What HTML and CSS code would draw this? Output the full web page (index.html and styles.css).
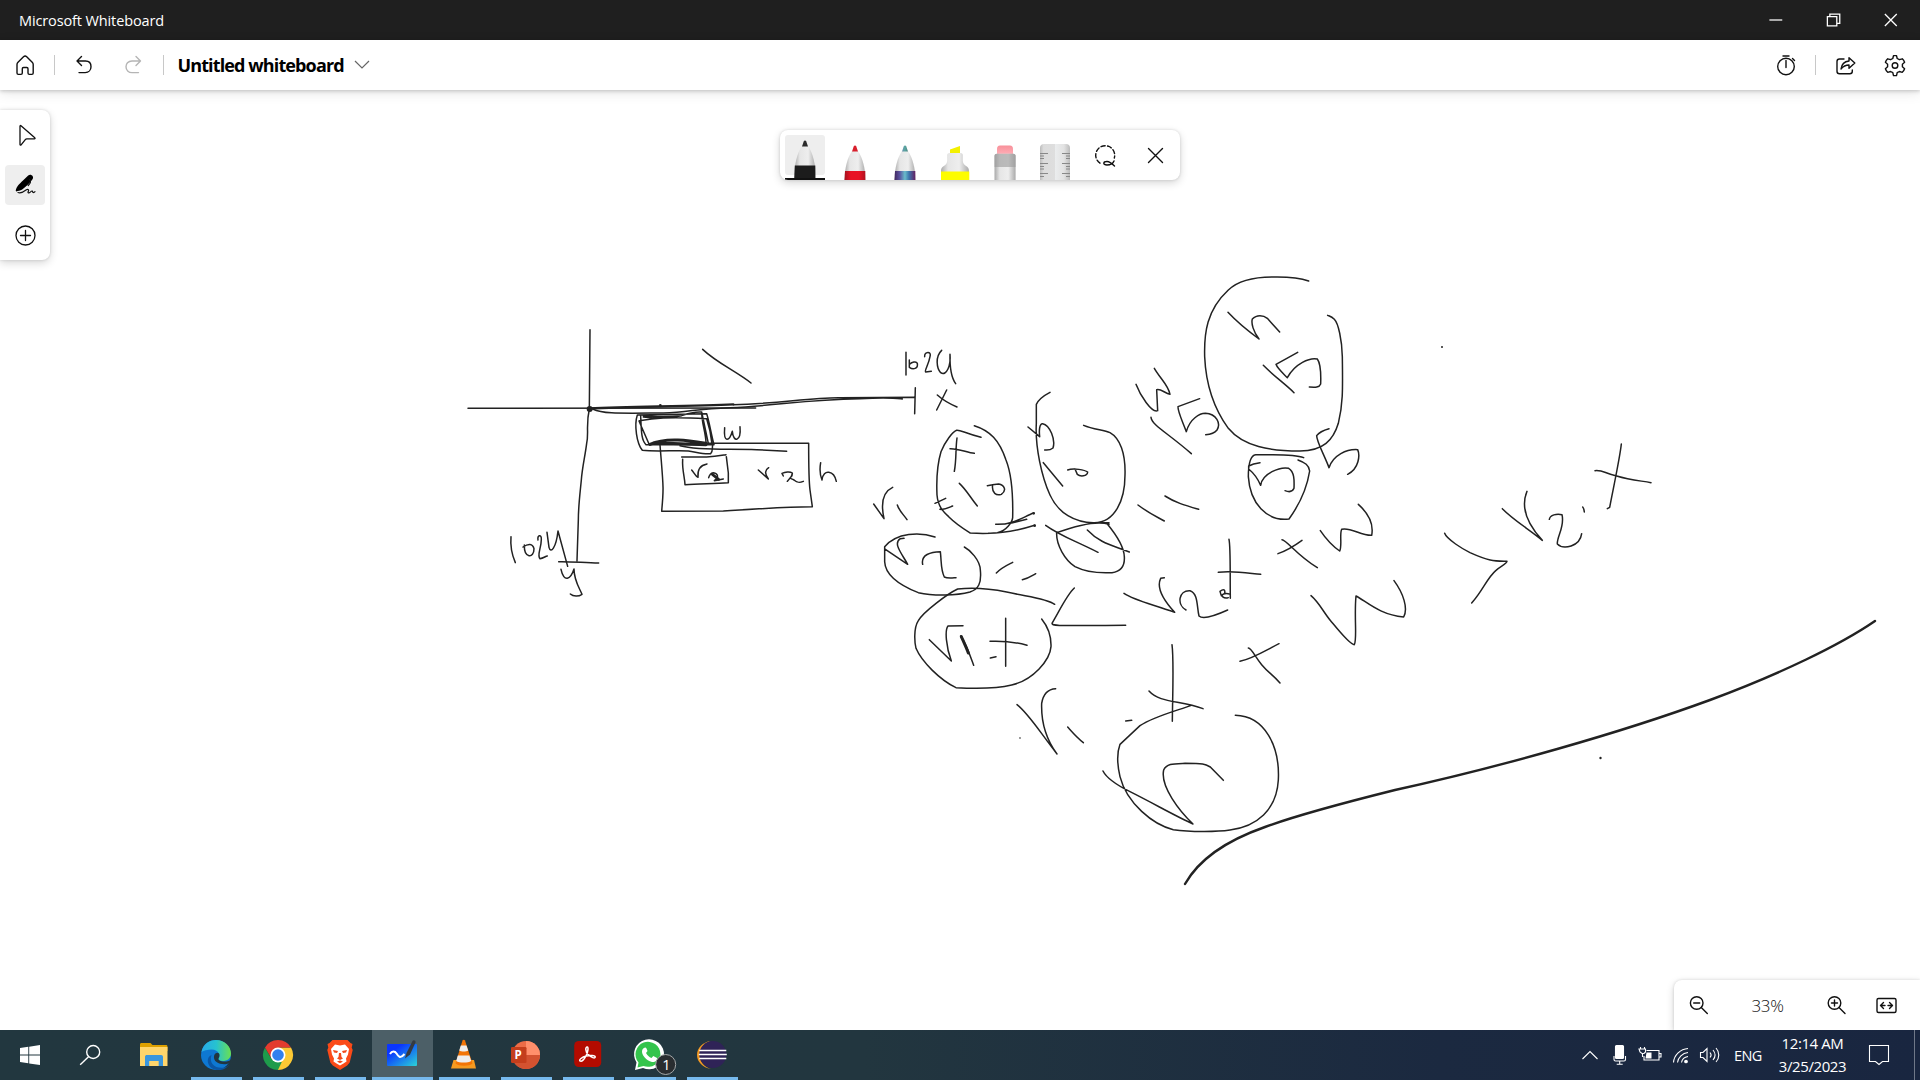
FILE: index.html
```html
<!DOCTYPE html>
<html lang="en">
<head>
<meta charset="utf-8">
<title>Microsoft Whiteboard</title>
<link rel="stylesheet" href="styles.css">
</head>
<body>
<header class="titlebar">
  <span class="app-name">Microsoft Whiteboard</span>
  <div class="window-controls">
    <svg viewBox="0 0 58 40"><path d="M14.500 20h13" stroke="#aaa" stroke-width="2"/></svg>
    <svg viewBox="0 0 58 40"><path d="M14.500 16.500h9.500v9.500H14.500zM17 16v-2h10v9.500h-2.500" stroke-width="1.300"/></svg>
    <svg viewBox="0 0 58 40"><path d="M15 14l12 12m0-12l-12 12" stroke-width="1.300"/></svg>
  </div>
</header>

<nav class="appbar">
  <div class="group">
    <svg class="tool home" viewBox="0 0 40 40"><path d="M12 19.500c0-1 .3-1.600 1-2.300l5.500-5.500c1-.9 2.200-.9 3.200 0l5.500 5.500c.7.700 1 1.300 1 2.300V28c0 .9-.4 1.400-1.300 1.400h-2.600c-.9 0-1.300-.5-1.300-1.400v-4.300c0-.8-.4-1.200-1.200-1.200h-3.300c-.8 0-1.200.4-1.200 1.200V28c0 .9-.4 1.400-1.300 1.400h-2.700c-.9 0-1.300-.5-1.300-1.400z"/></svg>
    <span class="divider"></span>
    <svg class="tool undo" viewBox="0 0 40 40"><path d="M18.500 11.500L14 16l4.500 4.500M14 16h8.500c4 0 5.500 3 5.500 5.700 0 3.300-2.300 5.900-5.800 5.900H16"/></svg>
    <svg class="tool redo" viewBox="0 0 40 40"><path d="M23 11.500l4.500 4.500-4.500 4.500M27.500 16H19c-4 0-6 3-6 5.700 0 3.300 2.500 5.900 6 5.900h6.500"/></svg>
    <span class="divider after-redo"></span>
    <h1 class="board-name">Untitled whiteboard</h1>
    <svg class="chevron" viewBox="0 0 16 10"><path d="M1 1l7 7 7-7"/></svg>
  </div>
  <div class="group">
    <svg class="tool" viewBox="0 0 40 40"><circle cx="20" cy="21.500" r="8.300"/><path d="M20 15.500v7M17 11h6M26.500 13.500l2 2"/></svg>
    <span class="divider before-share"></span>
    <svg class="tool share" viewBox="0 0 40 40"><path d="M19 14h-4.500c-1.700 0-2.500.9-2.500 2.500v9.800c0 1.600.9 2.500 2.500 2.500h10.300c1.600 0 2.500-.9 2.500-2.500V25M24 16v-3.300l5.800 5.300-5.800 5.300V20c-4 0-6 1.500-8 4 .6-4.500 3.500-7.600 8-8z"/></svg>
    <svg class="tool gear" viewBox="0 0 40 40"><circle cx="20" cy="20.500" r="2.800"/><path d="M17.800 13.500l.7-2.900h3l.7 2.900 2.200 1.200 2.900-.9c1 .9 1.900 2.300 2.300 3.500L27.400 19.200v2.600l2.200 2c-.4 1.200-1.300 2.700-2.300 3.500l-2.900-.8-2.200 1.200-.7 2.900h-3l-.7-2.900-2.200-1.200-2.900.8c-1-.8-1.900-2.300-2.300-3.500l2.200-2v-2.600l-2.200-1.900c.4-1.200 1.300-2.600 2.300-3.500l2.900.9z"/></svg>
  </div>
</nav>

<main class="board">
  <svg class="ink" viewBox="0 90 1920 940">
    <!-- coordinate axes with the two rectangles -->
    <g transform="translate(450 310) scale(.33333)">
      <path d="M420 59L418 297M54 295L917 294M418 297C407 345 417 370 410 400C405 440 397 470 394 510C389 560 385 590 385 630L381 752M326 755C360 754 400 758 446 759"/>
      <circle class="dot" cx="419" cy="297" r="9"/><circle class="dot" cx="631" cy="286" r="4"/>
      <path d="M418 295C560 290 740 288 850 283" stroke-width="7"/>
      <path d="M850 284C980 282 1080 262 1170 263L1393 262M428 297C460 312 500 310 640 309C720 307 740 295 840 293C980 288 1060 268 1230 266C1320 262 1330 264 1357 267M1396 233L1394 311M1462 255Q1484 275 1521 291M1490 240L1460 300M758 118C800 158 860 185 903 219"/>
      <path d="M1368 127V195M1378 150V172C1390 180 1405 176 1402 160C1398 152 1386 157 1378 163M1424 140C1422 124 1446 122 1440 140C1436 165 1422 182 1427 186L1444 184M1475 121C1455 140 1460 175 1472 188C1490 200 1503 165 1500 133C1499 180 1505 205 1517 221"/>
      <path d="M562 315C552 345 560 400 577 421C620 426 680 420 715 423C745 428 765 434 782 431C790 425 785 415 789 400M562 315L770 311C778 335 783 370 792 404M572 317C574 365 574 390 588 404L789 404M567 333L597 402M580 321C620 326 640 325 695 317C720 308 740 305 755 306L775 400M568 332C610 325 650 320 770 326C778 350 784 380 786 402M755 306C755 340 768 370 768 400M580 318C610 318 640 322 695 317"/>
      <path d="M600 403C650 380 720 392 768 400M612 398L768 404" stroke-width="9"/>
      <path d="M768 400H1076C1076 480 1076 510 1080 540L1087 590C1000 590 950 596 820 603L635 604C642 530 640 530 630 405M690 407C750 423 840 415 920 419L1010 424"/>
      <path d="M824 353C820 400 838 395 847 364C850 400 874 395 870 350M695 441H770C795 440 810 437 828 434M698 448C696 480 704 500 705 524C750 520 790 522 835 518L835 489L829 440M725 480C732 488 738 500 744 502C742 480 748 466 771 462"/>
      <path d="M776 503C778 495 784 489 790 488C804 490 808 502 793 512L820 507"/>
      <path d="M787 493L806 508" stroke-width="8"/>
      <path d="M925 480L955 507C943 490 945 480 956 473M1000 498L996 490C1005 486 1020 484 1027 489C1028 500 1015 508 1012 514M1026 497C1016 508 1022 504 1032 510C1042 520 1050 518 1060 514M1112 458C1108 480 1112 500 1116 510C1120 475 1152 482 1159 514"/>
      <path d="M183 680C180 715 186 735 196 758M223 705C222 745 252 747 252 716C248 700 235 700 219 711M264 690C261 674 275 672 274 688C274 715 260 735 270 746C280 745 286 739 292 738M291 667L297 712C302 732 318 715 324 663L353 769M333 778C342 820 362 808 372 777C372 810 386 830 396 853C386 860 370 860 361 852"/>
    </g>
    <!-- first columns of the comparison -->
    <g transform="translate(860 370) scale(.33333)">
      <path d="M363 202C310 188 303 180 290 181C278 185 255 215 243 245C231 285 229 330 231 375C234 410 250 425 266 440C290 464 320 482 331 489C360 491 395 490 412 488C440 483 457 455 458 443C460 350 450 300 438 270C418 210 390 182 343 167M291 204C286 240 290 265 283 304M270 236C295 235 320 247 343 250M298 340C320 360 330 382 352 408M382 347L398 344C394 370 410 378 424 373C442 360 432 345 416 342L397 344M225 400L257 385M240 418C255 420 268 412 278 408M407 463C460 465 490 440 521 429M385 490C440 490 480 480 524 466M455 459L500 448"/>
      <circle class="dot" cx="521" cy="430" r="4"/><circle class="dot" cx="524" cy="467" r="4"/>
      <path d="M570 67C545 80 535 90 529 103V160C525 230 545 320 570 375C595 430 645 458 700 458C765 460 795 390 795 315C797 250 780 205 750 188C730 180 700 178 671 166M504 171L539 200C537 182 538 160 548 161C570 165 587 210 579 234C572 240 563 241 554 240M550 278L608 348M623 300C640 293 675 300 683 306C682 320 660 320 652 313L645 297M557 466C600 497 640 510 714 547M682 480C720 520 755 525 808 546M747 463C710 450 640 470 590 488C588 525 615 570 645 590C690 613 740 608 756 608C780 605 795 590 793 560C792 530 765 490 742 462M700 458H747"/>
      <path d="M41 402L72 446C62 400 70 365 98 352M112 405C118 424 132 435 141 449M225 501C180 485 110 487 74 530V575C76 620 130 650 175 668C220 678 290 677 330 666C355 658 365 640 361 600C360 570 330 540 313 531M74 537L143 583C125 550 98 520 121 506L132 505M188 583C182 555 212 545 241 545C245 580 242 600 253 621C262 626 275 624 288 623M409 609C425 592 442 585 458 577M487 629C505 625 515 618 527 611"/>
      <path d="M584 703C560 685 500 680 440 666C400 658 340 652 293 657C265 670 190 725 175 752C160 775 164 820 168 835C185 875 240 930 288 953C340 956 410 956 455 945C520 930 570 870 573 830C574 800 562 768 545 747M208 809L274 873C258 830 254 780 264 768L309 767M437 745V889M390 814C440 812 480 820 501 826M391 864L408 860M302 798C320 825 328 850 341 886M643 654C620 675 600 720 576 760C576 768 585 767 797 766"/>
      <path d="M304 800C313 820 320 835 325 849" stroke-width="9"/>
      <path d="M834 405C870 432 890 440 913 453M915 378C945 397 970 405 1016 418M471 1004C505 1030 535 1080 591 1152C560 1110 543 1060 545 1000C550 970 565 957 587 956M623 1071C640 1090 650 1102 670 1118"/>
    </g>
    <!-- upper right: circled h 15 and the 5s -->
    <g transform="translate(1100 260) scale(.33333)">
      <path d="M626 63C590 50 550 51 525 51C450 50 410 66 385 90C320 150 312 220 314 290C318 380 345 450 385 505C430 560 510 573 600 573C670 573 700 540 715 490C730 430 728 380 727 290C726 240 715 190 703 178C695 170 690 169 683 166M384 157C410 185 440 210 477 237C460 215 453 190 457 177C470 163 490 165 502 175L539 216M490 316C520 347 560 375 582 398M593 277L528 313C532 325 547 338 562 353C585 310 630 292 652 297C663 312 663 345 662 372C658 383 645 382 628 381"/>
      <path d="M163 325C180 355 205 375 210 403C195 400 182 385 170 389L173 452C155 460 120 405 108 373M153 472C155 495 205 520 274 581M299 416L234 440C233 455 248 485 259 515C270 475 300 460 316 460C350 462 363 490 351 510C343 520 330 523 317 524"/>
      <path d="M687 506C665 512 655 520 650 527C650 545 675 590 687 623C700 585 740 567 773 569C780 585 778 625 743 643M611 593C580 580 520 585 467 584C445 587 445 635 445 650C450 730 500 785 567 777C590 745 620 690 629 633C627 615 615 608 594 600M480 608C465 610 455 613 446 618V627C462 640 475 660 482 676C487 640 540 620 566 625C583 635 583 660 582 685C577 697 565 696 555 692"/>
      <path d="M387 838C392 860 390 930 391 1015M355 937C400 932 440 939 482 943M546 839C560 840 590 885 652 923M534 881C565 870 580 860 606 841M661 812C680 840 700 860 719 873C727 860 718 820 725 808C750 800 785 828 815 826C822 790 805 760 775 733M385 1013C372 1018 362 1008 360 994C372 985 376 990 374 1000M391 1003C378 998 370 1000 364 1007"/>
    </g>
    <!-- lower centre -->
    <g transform="translate(990 580) scale(.33333)">
      <path d="M402 40C435 62 485 72 554 97C515 55 500 20 512 -5L523 -7M588 90C560 75 565 30 600 32C625 40 620 80 627 108C640 120 680 105 713 90M546 194C552 240 548 330 547 424M477 333C510 370 570 360 639 386M750 244C790 235 825 212 867 191M775 204C785 205 795 230 815 254C835 278 850 285 870 309M407 423L425 421M604 376C560 392 490 410 450 437L390 493C380 520 383 560 390 590C410 670 490 735 550 749C600 756 680 756 720 750C800 740 860 690 865 600C870 500 825 408 736 406M339 573C350 595 390 620 420 635C490 670 560 710 609 732C570 695 510 620 521 570C530 550 550 551 585 550C640 550 645 552 661 561L700 601"/>
      <circle class="dot" cx="90" cy="474" r="2.500"/>
    </g>
    <!-- right: W > r2.x -->
    <g transform="translate(1250 420) scale(.33333)">
      <path d="M183 527C205 545 220 575 240 600C265 630 300 675 313 674C322 660 312 590 318 528C350 545 390 585 461 591C475 565 460 520 432 482M584 340C590 358 640 388 660 398C720 425 735 423 771 424C772 430 750 440 738 451C710 475 700 510 665 549M757 266C790 300 840 330 877 361C830 310 812 260 831 214M898 298C900 285 920 280 936 284C945 320 920 350 922 372C940 390 990 380 995 341M998 261C1002 265 1002 268 1003 276M1114 72C1110 110 1095 180 1079 262L1072 266M1035 152C1060 150 1060 158 1100 168C1140 180 1170 182 1203 188"/>
    </g>
    <path class="sweep" d="M1185 884C1198 861 1225 841 1265 827C1300 814 1355 800 1395 790C1500 767 1620 733 1710 700C1780 674 1840 645 1875 621"/>
    <circle class="dot" cx="1442" cy="347" r="1"/><circle class="dot" cx="1600.500" cy="758" r="1.200"/>
  </svg>

  <aside class="side-tools">
    <svg viewBox="0 0 50 50"><path d="M20 16v18.500c0 .7.700.9 1.100.4l4.200-5.300c.4-.5.900-.7 1.500-.7h7.500c.8 0 1-.7.500-1.100L21 15.700c-.5-.4-1-.2-1 .3z"/></svg>
    <svg class="active" viewBox="5 5 40 40"><path class="solid" d="M16 28c1-5 4-7 7-10l5.500-5.200c2.500-2.200 6.300.8 4.300 3.800-2.500 3.600-6 7.200-10.300 10.200-2 1.200-4 1.400-6 2z" transform="translate(-.3 2.700)"/><path d="M29.500 19.500c2 1.500 1 3.500-1.300 6M18 32.500c3 1 5.500-.5 8-2.500 2.500-1.500 3.300.5 2 2-.3 1.500 2 .8 3-.5 1-1 1.600-.3 1.800.8.800.5 1.700 0 2.200-.6" stroke-width="1.200"/></svg>
    <svg viewBox="0 0 50 50"><circle cx="25.500" cy="25.500" r="9.500"/><path d="M25.500 20.500v10m-5-5h10"/></svg>
  </aside>

  <section class="pen-bar">
    <svg width="0" height="0" class="defs"><defs>
      <linearGradient id="body"><stop stop-color="#aaa"/><stop offset=".25" stop-color="#e6e6e6"/><stop offset=".65" stop-color="#eee"/><stop offset="1" stop-color="#aaa"/></linearGradient>
      <linearGradient id="galaxy"><stop stop-color="#42275e"/><stop offset=".25" stop-color="#5a52a0"/><stop offset=".5" stop-color="#69bccb"/><stop offset=".7" stop-color="#3d75ad"/><stop offset="1" stop-color="#642062"/></linearGradient>
      <linearGradient id="tip"><stop stop-color="#6c8fb0"/><stop offset=".5" stop-color="#58a8a0"/><stop offset="1" stop-color="#4d8080"/></linearGradient>
      <linearGradient id="redband"><stop stop-color="#a3121f"/><stop offset=".3" stop-color="#e81224"/><stop offset=".7" stop-color="#e81224"/><stop offset="1" stop-color="#b01220"/></linearGradient>
      <linearGradient id="pink" x2="0" y2="1"><stop stop-color="#f8909a"/><stop offset="1" stop-color="#ffb0b8"/></linearGradient>
      <linearGradient id="steel"><stop stop-color="#bbb"/><stop offset=".12" stop-color="#dcdcdc"/><stop offset=".5" stop-color="#dedede"/><stop offset=".5" stop-color="#ebedee"/><stop offset=".8" stop-color="#e2e2e2"/><stop offset="1" stop-color="#bbb"/></linearGradient>
    </defs></svg>
    <svg viewBox="0 0 50 50"><rect x="5" y="5" width="40" height="40" rx="3" fill="#eee"/><path d="M14.500 48C14 35 17 23 22.500 15h5C33 23 36 35 35.500 48z" fill="url(#body)"/><path d="M22 16.500l1.700-5c.6-1.200 2-1.200 2.600 0l1.700 5z" fill="#2a2a2a"/><path d="M14.800 35.500h20.500V48H14.300z" fill="#1c1c1c"/><path d="M5 48h40v2H5z" fill="#111"/></svg>
    <svg viewBox="0 0 50 50"><path d="M14.500 50C15 37 17 29 22 21h6c5 8 7 16 7.500 29z" fill="url(#body)"/><path d="M22 21.500l1.700-5c.6-1.200 2-1.200 2.600 0l1.700 5z" fill="#d81f2c"/><path d="M15 41h20.300V50H14.500z" fill="url(#redband)"/></svg>
    <svg viewBox="0 0 50 50"><path d="M14.500 50C15 37 17 29 22 21h6c5 8 7 16 7.500 29z" fill="url(#body)"/><path d="M22 21.500l1.700-5c.6-1.200 2-1.200 2.600 0l1.700 5z" fill="url(#tip)"/><path d="M15 41h20.300V50H14.500z" fill="url(#galaxy)"/></svg>
    <svg viewBox="0 0 50 50"><path d="M20 24v-4.500l10-3.500V24z" fill="#f3f000"/><path d="M11 50V41c0-6 5.500-4 6.200-10v-6c0-1 .6-2 2-2h11.600c1.400 0 2 1 2 2v6C33.500 37 39 35 39 41v9z" fill="url(#body)"/><path d="M11 41.500h28.300V50H11z" fill="#fdfc00"/></svg>
    <svg viewBox="0 0 50 50"><path d="M17 25v-6c0-2 1-3.500 3-3.500h10c2 0 3 1.500 3 3.500v6z" fill="url(#pink)"/><path d="M14.500 50V26c0-1.500 1-2.300 2.300-2.300h16.500c1.200 0 2.300.8 2.300 2.300v24z" fill="url(#body)"/><path d="M14.500 37V26c0-1.500 1-2.300 2.300-2.300h16.500c1.200 0 2.300.8 2.300 2.300v11z" fill="#999" opacity=".6"/></svg>
    <svg viewBox="0 0 50 50"><path d="M10 50V18c0-2.500 1.500-4 4-4h22c2.500 0 4 1.500 4 4v32z" fill="url(#steel)"/><path d="M10 23.500h8m-8 2.500h4m-4 2.500h4m-4 5h8m-8 3h4m-4 2.500h4m-4 4.500h8m-8 3h4M40 23.500h-8m8 2.500h-4m4 2.500h-4m4 5h-8m8 3h-4m4 2.500h-4m4 4.500h-8m8 3h-4" stroke="#888"/></svg>
    <svg class="line" viewBox="0 0 50 50"><path d="M20 33.200A9.500 9.500 0 1 1 34.300 28" stroke-dasharray="4.200 2.400"/><path d="M34.500 36c-2-2-4.500-4.500-7.500-4.500-4 0-4.500 3.500 0 3.500 3.500 0 6-1.500 7-4"/></svg>
    <svg class="line" viewBox="0 0 50 50"><path d="M18.500 18.500l14 14m0-14l-14 14"/></svg>
  </section>

  <section class="zoom-bar">
    <svg viewBox="0 0 30 30"><circle cx="12.700" cy="13" r="6.300"/><path d="M17.300 17.500l6 6M9.700 13h6"/></svg>
    <span class="zoom-level">33%</span>
    <svg viewBox="0 0 30 30"><circle cx="13.500" cy="13" r="6.300"/><path d="M18 17.500l6 6M10.500 13h6m-3-3v6"/></svg>
    <svg viewBox="0 0 30 30"><rect x="6" y="8.500" width="19" height="14" rx="1.500"/><path d="M12.500 12.500L9.500 15.500l3 3M9.500 15.500h4.500M18.500 12.500l3 3-3 3M21.500 15.500h-4.500"/></svg>
  </section>
</main>

<footer class="taskbar">
  <div class="apps">
    <svg class="start" viewBox="0 0 60 50"><path fill="#fff" d="M20 18l8.300-1.200v7.700H20zM29.200 16.700L40 15v9.500H29.200zM20 25.500h8.300v7.700L20 32zM29.200 25.500H40V35l-10.800-1.600z"/></svg>
    <svg class="search" viewBox="0 0 60 50"><g fill="none" stroke="#fff" stroke-width="1.400"><circle cx="33.200" cy="22" r="6.500"/><path d="M28.500 26.800l-8.300 8"/></g></svg>
    <svg viewBox="0 0 62 50"><path d="M16 14.500c0-.8.500-1.500 1.500-1.500h9l2 2H42c1 0 1.500.6 1.500 1.500V21H16z" fill="#dda000"/><path d="M16 17h27.500v19H16z" fill="#ffd56b"/><path d="M21 36v-9c0-1.500.8-2 2-2h14c1.300 0 2 .7 2 2v9h-4.300v-5h-9.500v5z" fill="#3a96dd"/></svg>
    <svg class="running" viewBox="0 0 62 50"><defs><linearGradient id="edgeTop"><stop stop-color="#28a9e8"/><stop offset=".5" stop-color="#26c2d0"/><stop offset="1" stop-color="#6be050"/></linearGradient></defs><circle cx="30" cy="25" r="15" fill="#0e78d2"/><path d="M15.500 22C17 14 23 10 30 10c9 0 15 6.500 15 13.500 0 5-4 7.500-8.500 7.500-3 0-4.500-1-4-2.500 2-2 1-9-7-9-4 0-8 1-10 2.500z" fill="url(#edgeTop)"/><path d="M25.500 25c-3 9 4 14 13 12.500 2-.5 4-2 5-3.500-3 6-12 8-18 4-5-4-5-11 0-13z" fill="#0b56a4"/><path d="M32.500 28.500c-1 2 4 4 10 2.500l2.500-1c-1 3-2.500 3.500-4 4-7 1-14-2-13-8 1-4 5.500-4 5.500-1 0 2-.7 2.500-1 3.500z" fill="#22363f"/></svg>
    <svg class="running" viewBox="0 0 62 50"><path d="M43 17.500A15 15 0 0 1 30 40l0-15z" fill="#fcc934"/><path d="M30 40A15 15 0 0 1 17 17.500L23.500 29l6.500 3h4z" fill="#1e9b4b"/><path d="M29 17.500h14L34 32l-4 8 6.500-11z" fill="#fcc934"/><path d="M17 17.500a15 15 0 0 1 26 0H30l-6.500 11z" fill="#e33b2e"/><circle cx="30" cy="25" r="7.500" fill="#fff"/><circle cx="30" cy="25" r="5.800" fill="#3280ee"/></svg>
    <svg class="running" viewBox="0 0 62 50"><path d="M22.500 10h15l3 3 2 1-.8 3.500 1 2.500-3 12.500-2.500 3L30 40l-7.200-4.500-2.500-3-3-12.500 1-2.500-.8-3.500 2-1z" fill="#fb4a18"/><path d="M25 14.500l5 1 5-1 4 4.500-1 5.500-2 4 .5 3-3 2-3.500 2-3.500-2-3-2 .5-3-2-4-1-5.500z" fill="#fff"/><path d="M23 20l5 1-1 2-3-.5zM37 20l-5 1 1 2 3-.5zM29 23h2l.5 4 1.500 1.500-3 1.500-3-1.500 1.500-1.500zM27 31.500l3-1 3 1-3 1.700z" fill="#f24a1d"/></svg>
    <svg class="running current" viewBox="0 0 62 50"><defs><linearGradient id="wb" x2="1" y2="1"><stop offset=".25" stop-color="#0a35ff"/><stop offset="1" stop-color="#2bd3d6"/></linearGradient></defs><rect x="15" y="14" width="30" height="22" rx="1" fill="url(#wb)"/><path d="M18 24c2-3.500 5-3 6.500-.5s3.500 6 8 .5" fill="none" stroke="#fff" stroke-width="2"/><path d="M33 28.500l1.500-5.500L40.500 11c1-1.500 3.500-.5 3 1.500L38 24.500z" fill="#343a42"/></svg>
    <svg class="running" viewBox="0 0 62 50"><g transform="translate(-.5)"><path d="M20 30h20.500l2 8.500H17.500z" fill="#f59a20"/><path d="M29 10.500c.5-.9 2-.9 2.500 0l7.500 23c-3 3-14 3-17 0z" fill="#f27405"/><path d="M27.300 15.500h5.700l1.700 5c-2 1.300-7 1.300-9 0zM24.300 25.500h11.600l1.800 5.500c-3 2-12 2-15 0z" fill="#ededed"/></g></svg>
    <svg class="running" viewBox="0 0 62 50"><g transform="translate(-2)"><circle cx="32" cy="25" r="14" fill="#ed6c47"/><path d="M32 11a14 14 0 0 1 14 14H32z" fill="#ff8f6b"/><path d="M18 25h28a14 14 0 0 1-28 0z" fill="#d35230"/><rect x="17" y="17" width="15.500" height="16" rx="1.300" fill="#c43e1c"/><text x="20.500" y="29.200" class="ppt">P</text></g></svg>
    <svg class="running" viewBox="0 0 62 50"><g transform="translate(-1.800)"><rect x="18" y="11" width="27" height="26" rx="4.500" fill="#b30b00"/><path d="M24 31c-2-1 2-4 6-5 4-1 9-.5 9 1 0 2-4 .5-7-2.500-3-3-3-7.500-1-7.500 1.500 0 .8 5-1 8.500-2 4-4.500 6.500-6 5.500z" fill="none" stroke="#fff" stroke-width="1.500"/></g></svg>
    <svg class="running" viewBox="0 0 62 50"><g transform="translate(-2)"><path d="M17 40l1.500-7.500A15 15 0 1 1 25 38z" fill="#fff"/><path d="M19.500 37.500l1-5A12.500 12.500 0 1 1 25.500 36z" fill="#34c44c"/><path d="M26 18c1-1 2-.5 2.500.5l1 2.500-1.500 2c1.500 2.500 3 4 5.500 5l1.800-2 3.700 2c.3 3-2.500 4.500-5 4-6-1.500-10-7-10-10.500 0-2 1-3 2-3.500z" fill="#fff"/><circle cx="47.700" cy="34.500" r="10" fill="#292d30" stroke="#a4a7a8"/><text x="44.200" y="39.700" class="badge">1</text></g></svg>
    <svg class="running" viewBox="0 0 62 50"><g transform="translate(-2.200)"><path d="M31 11c-8 1-13.800 7-13.800 14S23 37.500 31 39c-7-2-11-8-11-14s4-12 11-14z" fill="#f39822"/><circle cx="33" cy="24.500" r="13.500" fill="#2f2357"/><path d="M19.500 20.500h27m-27.500 4h28m-27.500 4h27" stroke="#fff" stroke-width="1.700"/></g></svg>
  </div>
  <div class="tray">
    <svg viewBox="0 0 32 50"><path d="M8.500 29l7.500-7.500 7.500 7.500"/></svg>
    <svg viewBox="0 0 28 50"><rect x="9.500" y="15.500" width="8" height="13" rx="1" fill="#fff"/><path d="M8 26v3.500c0 1 .5 1.500 1.500 1.500h8.500c1 0 1.500-.5 1.500-1.500V26M13.700 31v3m-3 .2h6"/></svg>
    <svg viewBox="1.500 0 34 50"><path d="M14 20.500h12.500v9.500H11.500v-4M27 23.500h1.500v3.500H27M8 18.500v-1.500m4 0v1.500M6.500 19h6.500v3l-1.500 1.500h-2L7.500 22zM10 23v4"/><path d="M14 22.500h5v6h-6z" fill="#fff" stroke="none"/></svg>
    <svg viewBox="1.500 0 28 50"><path d="M21.500 18.500C14 19 7.500 25 7 32.500M21.500 22.500c-5.500.5-10 5-10.500 10M21.500 26.500c-3.500.5-6 3-6.500 6"/><circle cx="19.500" cy="31.500" r="1.300" fill="#fff"/></svg>
    <svg viewBox="4 0 34 50"><path d="M8.500 22.500h2.500l4-4v13l-4-4H8.500zM18 22.500c1.300 1.500 1.300 3.500 0 5M21 20c2.500 3 2.500 7 0 10M24 18c3.700 4 3.700 10 0 14"/></svg>
    <span class="lang">ENG</span>
    <div class="clock"><span class="time">12:14 AM</span><span class="date">3/25/2023</span></div>
    <svg class="notify" viewBox="0 0 40 50"><path d="M10.500 15.500h19v16h-6l-3.500 3-3.500-3h-6z"/></svg>
    <span class="show-desktop"></span>
  </div>
</footer>
</body>
</html>
```
FILE: styles.css
```css
* { box-sizing: border-box; }
body {
  margin: 0;
  width: 1920px;
  height: 1080px;
  overflow: hidden;
  display: flex;
  flex-direction: column;
  background: #fff;
  font-family: "Open Sans", "Noto Sans", sans-serif;
}
svg { display: block; flex: none; }

.titlebar {
  height: 40px;
  flex: none;
  display: flex;
  align-items: center;
  justify-content: space-between;
  padding-left: 19px;
  background: #1f1f1f;
  color: #fff;
}
.app-name { font-size: 14.5px; letter-spacing: -.12px; }
.window-controls { display: flex; width: 165px; overflow: hidden; }
.window-controls svg { width: 57.500px; height: 40px; fill: none; stroke: #fff; }

.appbar {
  position: relative;
  z-index: 2;
  height: 50px;
  flex: none;
  display: flex;
  align-items: center;
  justify-content: space-between;
  background: #fff;
  box-shadow: 0 1px 4px rgba(0, 0, 0, .2), 0 3px 12px rgba(0, 0, 0, .1);
  padding: 0 5px;
}
.group { display: flex; align-items: center; }
.tool { width: 40px; height: 40px; fill: none; stroke: #111; stroke-width: 1.4; stroke-linecap: round; stroke-linejoin: round; }
.divider { width: 1px; height: 20px; background: #c8c8c8; margin: 0 9px; }
.undo { margin: 0 10px 0 -1.5px; }
.redo { stroke: #b5b5b5; margin-right: 1px; }
.board-name { margin: 0 0 0 5px; font-size: 18px; font-weight: 700; letter-spacing: -.88px; color: #000; white-space: nowrap; }
.chevron { width: 16px; height: 10px; margin-left: 10px; fill: none; stroke: #666; stroke-width: 1.2; }
.before-share { margin: 0 9px; }
.gear { margin-left: 10px; }

.board { position: relative; flex: 1; overflow: hidden; background: #fff; }
.ink { width: 1920px; height: 940px; fill: none; stroke: #222; stroke-width: 4.5; stroke-linecap: round; stroke-linejoin: round; }
.ink .dot { fill: #222; stroke: none; }
.ink .sweep { stroke-width: 2.4; }

.side-tools, .pen-bar, .zoom-bar {
  position: absolute;
  background: #fff;
  box-shadow: 0 0 3px rgba(0, 0, 0, .14), 0 3px 9px rgba(0, 0, 0, .16);
}
.side-tools { left: 0; top: 20px; width: 50px; border-radius: 0 8px 8px 0; }
.side-tools svg { width: 50px; height: 50px; fill: none; stroke: #111; stroke-width: 1.3; stroke-linecap: round; stroke-linejoin: round; }
.side-tools .active { background: #eee; width: 40px; height: 40px; margin: 5px; border-radius: 4px; }
.side-tools .solid { fill: #000; stroke: none; }
.pen-bar { left: 780px; top: 40px; display: flex; width: 400px; height: 50px; border-radius: 8px; overflow: hidden; }
.pen-bar svg { width: 50px; height: 50px; }
.pen-bar .defs { width: 0; height: 0; }
.pen-bar .line { fill: none; stroke: #111; stroke-width: 1.4; stroke-linecap: round; }
.zoom-bar { right: 0; bottom: 0; width: 246px; height: 50px; border-radius: 8px 0 0 0; display: flex; align-items: center; padding: 0 19px 0 10px; }
.zoom-bar svg { width: 30px; height: 30px; fill: none; stroke: #111; stroke-width: 1.4; stroke-linecap: round; stroke-linejoin: round; }
.zoom-level { width: 107px; padding-top: 1px; text-align: center; font-size: 17px; font-weight: 300; letter-spacing: -.3px; color: #111; }
.zoom-bar svg:last-child { margin-left: 20px; }

.taskbar {
  height: 50px;
  flex: none;
  display: flex;
  justify-content: space-between;
  background: linear-gradient(90deg, #22373f 0%, #22363f 45%, #1b2940 75%, #192640 100%);
  color: #fff;
}
.apps, .tray { display: flex; }
.apps svg { width: 62px; height: 50px; overflow: visible; }
.apps .start { width: 60px; }
.apps .search { width: 60px; margin-right: 4px; }
.apps .running { background: linear-gradient(#76b9ed, #76b9ed) 5px 47px / 51px 3px no-repeat; }
.apps .current { background: linear-gradient(#76b9ed, #76b9ed) 0 47px / 61px 3px no-repeat, linear-gradient(#4c5f67, #4c5f67) 0 0 / 61px 47px no-repeat; }
.ppt { font: 700 11.5px "Open Sans", sans-serif; fill: #fff; }
.badge { font: 14.5px "Open Sans", sans-serif; fill: #fff; }
.tray { align-items: center; }
.tray svg { height: 50px; fill: none; stroke: #fff; stroke-width: 1.1; }
.tray svg:nth-of-type(1) { width: 32px; }
.tray svg:nth-of-type(2) { width: 28px; }
.tray svg:nth-of-type(3) { width: 34px; }
.tray svg:nth-of-type(4) { width: 28px; }
.tray svg:nth-of-type(5) { width: 34px; }
.tray svg:nth-of-type(3), .tray svg:nth-of-type(4) { margin-left: 0; }
.tray svg:nth-of-type(5) { margin-left: 0; }
.lang { width: 36px; padding-left: 4px; font-size: 14.5px; letter-spacing: -.6px; }
.clock { width: 93px; margin-left: 1px; padding-right: 2px; display: flex; flex-direction: column; align-items: center; font-size: 15px; line-height: 23px; letter-spacing: -.4px; }
.tray .notify { width: 40px; margin-left: -1px; }
.show-desktop { width: 6px; height: 50px; margin-left: 15px; border-left: 1px solid #6f7888; }
```
